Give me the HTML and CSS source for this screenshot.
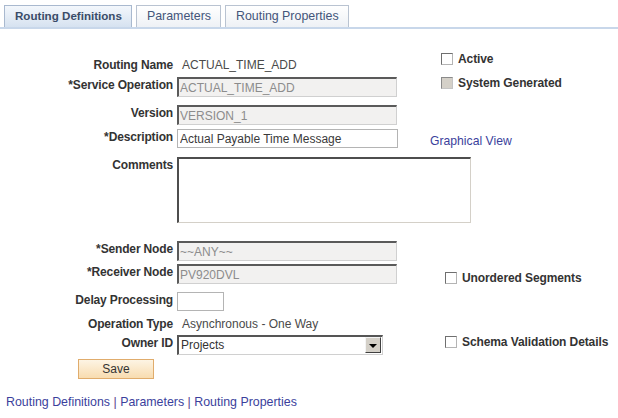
FILE: index.html
```html
<!DOCTYPE html>
<html>
<head>
<meta charset="utf-8">
<link rel="stylesheet" href="styles.css">
</head>
<body>
<div class="tabs">
  <div class="tab active">Routing Definitions</div>
  <div class="tab">Parameters</div>
  <div class="tab">Routing Properties</div>
</div>

<div class="form">
  <div class="lbl">Routing Name</div>
  <div class="fld val">ACTUAL_TIME_ADD</div>
  <div class="side chk s-active"><span class="cb"></span>Active</div>

  <div class="lbl">*Service Operation</div>
  <div class="fld"><input class="inp dis" type="text" value="ACTUAL_TIME_ADD" disabled></div>
  <div class="side chk s-sys"><span class="cb cb-dis"></span>System Generated</div>

  <div class="lbl">Version</div>
  <div class="fld"><input class="inp dis" type="text" value="VERSION_1" disabled></div>

  <div class="lbl">*Description</div>
  <div class="fld"><input class="inp edit" type="text" value="Actual Payable Time Message"></div>
  <div class="side s-graph"><a class="link" href="#">Graphical View</a></div>

  <div class="lbl">Comments</div>
  <div class="fld wide"><textarea class="area"></textarea></div>

  <div class="lbl">*Sender Node</div>
  <div class="fld"><input class="inp dis" type="text" value="~~ANY~~" disabled></div>

  <div class="lbl">*Receiver Node</div>
  <div class="fld"><input class="inp dis" type="text" value="PV920DVL" disabled></div>
  <div class="side chk s-unord"><span class="cb"></span>Unordered Segments</div>

  <div class="lbl">Delay Processing</div>
  <div class="fld"><input class="inp edit small" type="text" value=""></div>

  <div class="lbl">Operation Type</div>
  <div class="fld val">Asynchronous - One Way</div>

  <div class="lbl">Owner ID</div>
  <div class="fld">
    <div class="select"><span class="sel-text">Projects</span><span class="sel-btn"><span class="tri"></span></span></div>
  </div>
  <div class="side chk s-schema"><span class="cb"></span>Schema Validation Details</div>

  <div class="btn-cell"><button class="save" type="button">Save</button></div>
</div>

<div class="links">
  <a class="link" href="#">Routing Definitions</a><span class="sep"> | </span><a class="link" href="#">Parameters</a><span class="sep"> | </span><a class="link" href="#">Routing Properties</a>
</div>
</body>
</html>
```

FILE: styles.css
```css
html, body {
  margin: 0;
  padding: 0;
  background: #ffffff;
}
body {
  font-family: "Liberation Sans", Arial, sans-serif;
  font-size: 12px;
  color: #333333;
  width: 618px;
  height: 418px;
  overflow: hidden;
}

/* Tabs */
.tabs {
  display: flex;
  gap: 4px;
  padding: 5px 0 0 4px;
  border-bottom: 2px solid #c8d7ea;
}
.tab {
  height: 20px;
  line-height: 20px;
  padding: 0 9px 1px 10px;
  border: 1px solid #b9c3d1;
  border-bottom: none;
  background: linear-gradient(#ffffff, #eef1f5);
  color: #44557a;
  font-size: 12.4px;
}
.tab.active {
  background: linear-gradient(#f3f7fc, #d6e2f0);
  border-color: #a9b9cf;
  color: #3a4c68;
  font-weight: bold;
  font-size: 11.6px;
}

/* Form grid */
.form {
  display: grid;
  grid-template-columns: 173px 249px 1fr;
  grid-template-rows: 20px 28px 24px 28px 84px 23px 28px 24px 19px 24px 20px;
  column-gap: 4px;
  margin-top: 28px;
}
.lbl {
  grid-column: 1;
  text-align: right;
  font-weight: bold;
  line-height: 14px;
  padding-top: 1px;
  color: #333333;
  white-space: nowrap;
  letter-spacing: -0.15px;
}
.fld {
  grid-column: 2;
}
.fld.wide {
  grid-column: 2 / 4;
}
.val {
  padding: 1px 0 0 5px;
  line-height: 14px;
  color: #4a4a4a;
  white-space: nowrap;
}
.side {
  grid-column: 3;
  align-self: start;
  line-height: 14px;
  white-space: nowrap;
}
.chk {
  display: flex;
  align-items: center;
  gap: 4px;
  font-weight: bold;
  color: #333333;
  letter-spacing: -0.1px;
}
.s-active { margin-top: -5px; padding-left: 11px; }
.s-sys { margin-top: -1px; padding-left: 11px; }
.s-graph { margin-top: 5px; }
.s-unord { margin-top: 7px; padding-left: 15px; }
.s-schema { margin-top: 0; padding-left: 15px; }

.cb {
  display: inline-block;
  box-sizing: border-box;
  width: 12px;
  height: 12px;
  border: 1px solid;
  border-color: #6f6f6f #b4b4b4 #b4b4b4 #6f6f6f;
  background: #ffffff;
  margin-right: 1px;
}
.cb-dis {
  background: #d4d0c8;
  border-color: #8a8a8a #c4c4c4 #c4c4c4 #8a8a8a;
}

/* Inputs */
.inp {
  box-sizing: border-box;
  display: block;
  width: 220px;
  height: 20px;
  margin: 0;
  padding: 0 2px 0 1px;
  font-family: "Liberation Sans", Arial, sans-serif;
  font-size: 12px;
  outline: none;
}
.inp.dis {
  background: #f2f1f0;
  color: #8c8c8c;
  border-style: solid;
  border-width: 2px 1px 1px 2px;
  border-color: #5a5a5a #d0d0d0 #d0d0d0 #5a5a5a;
  -webkit-text-fill-color: #8c8c8c;
  opacity: 1;
}
.inp.edit {
  width: 221px;
  height: 19px;
  background: #ffffff;
  color: #3a3a3a;
  border: 1px solid #b4b4b4;
  padding: 0 2px;
}
.inp.small {
  width: 47px;
}
.area {
  display: block;
  box-sizing: border-box;
  width: 294px;
  height: 66px;
  margin: 0;
  padding: 0;
  resize: none;
  background: #ffffff;
  border-style: solid;
  border-width: 2px 1px 1px 2px;
  border-color: #4e4e4e #d4d0c8 #d4d0c8 #4e4e4e;
  outline: none;
}

/* Select */
.select {
  box-sizing: border-box;
  display: flex;
  align-items: stretch;
  width: 206px;
  height: 20px;
  background: #ffffff;
  border-style: solid;
  border-width: 2px 1px 1px 2px;
  border-color: #555555 #d0d0d0 #d0d0d0 #555555;
}
.sel-text {
  flex: 1;
  padding-left: 2px;
  line-height: 17px;
  color: #333333;
}
.sel-btn {
  box-sizing: border-box;
  width: 16px;
  margin: 0 1px 1px 0;
  background: #d4d0c8;
  border-style: solid;
  border-width: 1px;
  border-color: #f4f4f4 #404040 #404040 #f4f4f4;
  display: flex;
  align-items: center;
  justify-content: center;
}
.tri {
  width: 0;
  height: 0;
  border-left: 4px solid transparent;
  border-right: 4px solid transparent;
  border-top: 4px solid #000000;
  margin-top: 1px;
}

/* Save */
.btn-cell {
  grid-column: 1;
}
.save {
  box-sizing: border-box;
  margin-left: 78px;
  width: 76px;
  height: 20px;
  padding: 0;
  border: 1px solid #e0ac6c;
  background: linear-gradient(#fdf4e4, #f8dcb0);
  font-family: "Liberation Sans", Arial, sans-serif;
  font-size: 12px;
  color: #333333;
}

/* Links */
.link {
  color: #3b3f9c;
  text-decoration: none;
}
.links {
  margin-top: 16px;
  padding-left: 6px;
  line-height: 14px;
  font-size: 12.4px;
  white-space: nowrap;
}
.s-graph .link {
  font-size: 12.2px;
}
.sep {
  color: #5a3b8f;
}
```
